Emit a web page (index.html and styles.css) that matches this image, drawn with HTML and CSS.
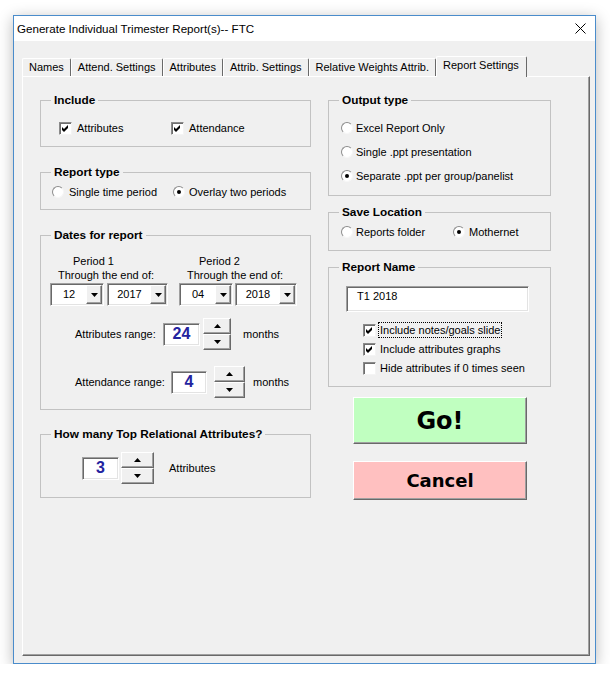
FILE: index.html
```html
<!DOCTYPE html>
<html>
<head>
<meta charset="utf-8">
<title>Generate Individual Trimester Report(s)</title>
<link rel="stylesheet" href="styles.css">
</head>
<body>
<div class="window">
  <div class="titlebar">
    <span class="title">Generate Individual Trimester Report(s)-- FTC</span>
    <svg class="close" width="11" height="11" viewBox="0 0 11 11"><path d="M0.5 0.5 L10.5 10.5 M10.5 0.5 L0.5 10.5" stroke="#000" stroke-width="1" fill="none"/></svg>
  </div>
  <div class="client">
    <div class="tabs">
      <div class="tab">Names</div>
      <div class="tab">Attend. Settings</div>
      <div class="tab">Attributes</div>
      <div class="tab">Attrib. Settings</div>
      <div class="tab">Relative Weights Attrib.</div>
      <div class="tab active">Report Settings</div>
    </div>
    <div class="page">
      <div class="col col-left">
        <fieldset class="grp g-include">
          <legend>Include</legend>
          <div class="gb row">
            <div class="chk w112"><span class="box"><svg width="11" height="11" viewBox="0 0 11 11"><polygon points="2,4 4,6 8,2 8,5 4,9 2,7" fill="#000"/></svg></span><span class="lbl">Attributes</span></div>
            <div class="chk"><span class="box"><svg width="11" height="11" viewBox="0 0 11 11"><polygon points="2,4 4,6 8,2 8,5 4,9 2,7" fill="#000"/></svg></span><span class="lbl">Attendance</span></div>
          </div>
        </fieldset>

        <fieldset class="grp g-rtype">
          <legend>Report type</legend>
          <div class="gb row">
            <div class="rad w121"><span class="radio"></span><span class="lbl gap5">Single time period</span></div>
            <div class="rad"><span class="radio on"></span><span class="lbl gap4">Overlay two periods</span></div>
          </div>
        </fieldset>

        <fieldset class="grp g-dates">
          <legend>Dates for report</legend>
          <div class="gb">
            <div class="periods">
              <div class="period">
                <div class="ptitle p1">Period 1</div>
                <div class="pthrough">Through the end of:</div>
                <div class="combos">
                  <div class="combo cw54"><span class="cval">12</span><span class="cbtn"><svg width="7" height="4" viewBox="0 0 7 4"><polygon points="0,0 7,0 3.5,4" fill="#000"/></svg></span></div>
                  <div class="combo cw61"><span class="cval">2017</span><span class="cbtn"><svg width="7" height="4" viewBox="0 0 7 4"><polygon points="0,0 7,0 3.5,4" fill="#000"/></svg></span></div>
                </div>
              </div>
              <div class="period period2">
                <div class="ptitle p2">Period 2</div>
                <div class="pthrough">Through the end of:</div>
                <div class="combos">
                  <div class="combo cw54"><span class="cval">04</span><span class="cbtn"><svg width="7" height="4" viewBox="0 0 7 4"><polygon points="0,0 7,0 3.5,4" fill="#000"/></svg></span></div>
                  <div class="combo cw62"><span class="cval">2018</span><span class="cbtn"><svg width="7" height="4" viewBox="0 0 7 4"><polygon points="0,0 7,0 3.5,4" fill="#000"/></svg></span></div>
                </div>
              </div>
            </div>

            <div class="spinrow sr-attr">
              <span class="slabel sl-attr">Attributes range:</span>
              <span class="num nw37">24</span>
              <div class="spin sp-attr">
                <span class="sbtn"><svg width="7" height="4" viewBox="0 0 7 4"><polygon points="0,4 7,4 3.5,0" fill="#000"/></svg></span>
                <span class="sbtn"><svg width="7" height="4" viewBox="0 0 7 4"><polygon points="0,0 7,0 3.5,4" fill="#000"/></svg></span>
              </div>
              <span class="unit u-attr">months</span>
            </div>

            <div class="spinrow sr-att">
              <span class="slabel sl-att">Attendance range:</span>
              <span class="num nw36">4</span>
              <div class="spin sp-att">
                <span class="sbtn"><svg width="7" height="4" viewBox="0 0 7 4"><polygon points="0,4 7,4 3.5,0" fill="#000"/></svg></span>
                <span class="sbtn"><svg width="7" height="4" viewBox="0 0 7 4"><polygon points="0,0 7,0 3.5,4" fill="#000"/></svg></span>
              </div>
              <span class="unit u-att">months</span>
            </div>
          </div>
        </fieldset>

        <fieldset class="grp g-top">
          <legend>How many Top Relational Attributes?</legend>
          <div class="gb spinrow">
            <span class="num nw37">3</span>
            <div class="spin sp-top">
              <span class="sbtn"><svg width="7" height="4" viewBox="0 0 7 4"><polygon points="0,4 7,4 3.5,0" fill="#000"/></svg></span>
              <span class="sbtn"><svg width="7" height="4" viewBox="0 0 7 4"><polygon points="0,0 7,0 3.5,4" fill="#000"/></svg></span>
            </div>
            <span class="unit u-top">Attributes</span>
          </div>
        </fieldset>
      </div>

      <div class="col col-right">
        <fieldset class="grp g-output">
          <legend>Output type</legend>
          <div class="gb radios">
            <div class="rad"><span class="radio"></span><span class="lbl gap3">Excel Report Only</span></div>
            <div class="rad"><span class="radio"></span><span class="lbl gap3">Single .ppt presentation</span></div>
            <div class="rad"><span class="radio on"></span><span class="lbl gap3">Separate .ppt per group/panelist</span></div>
          </div>
        </fieldset>

        <fieldset class="grp g-save">
          <legend>Save Location</legend>
          <div class="gb row">
            <div class="rad w112"><span class="radio"></span><span class="lbl gap3">Reports folder</span></div>
            <div class="rad"><span class="radio on"></span><span class="lbl gap4">Mothernet</span></div>
          </div>
        </fieldset>

        <fieldset class="grp g-name">
          <legend>Report Name</legend>
          <div class="gb">
            <div class="textbox">T1 2018</div>
            <div class="checks">
              <div class="chk"><span class="box"><svg width="11" height="11" viewBox="0 0 11 11"><polygon points="2,4 4,6 8,2 8,5 4,9 2,7" fill="#000"/></svg></span><span class="lbl focus">Include notes/goals slide</span></div>
              <div class="chk"><span class="box"><svg width="11" height="11" viewBox="0 0 11 11"><polygon points="2,4 4,6 8,2 8,5 4,9 2,7" fill="#000"/></svg></span><span class="lbl">Include attributes graphs</span></div>
              <div class="chk"><span class="box"></span><span class="lbl">Hide attributes if 0 times seen</span></div>
            </div>
          </div>
        </fieldset>

        <div class="bigbtn go">Go!</div>
        <div class="bigbtn cancel">Cancel</div>
      </div>
    </div>
  </div>
</div>
</body>
</html>
```

FILE: styles.css
```css
* { box-sizing: border-box; }

body {
  margin: 0;
  background: #ffffff;
  font-family: "Liberation Sans", Arial, sans-serif;
  font-size: 11px;
  color: #000;
}

.window {
  margin: 15px 0 0 13px;
  width: 583px;
  height: 649px;
  border: 1px solid #4a8ccb;
  background: #f0f0f0;
  box-shadow: 0 3px 14px rgba(0, 0, 0, 0.28);
}

.titlebar {
  height: 25px;
  background: #fff;
  display: flex;
  align-items: center;
  padding: 0 9px 0 3px;
}

.title {
  flex: 1;
  font-size: 11.6px;
  white-space: nowrap;
}

.close { display: block; }

.client {
  padding: 15px 0 0 8px;
}

/* tabs */
.tabs {
  display: flex;
  align-items: flex-end;
  height: 20px;
  position: relative;
  z-index: 1;
}

.tab {
  height: 18px;
  line-height: 16px;
  padding: 0 6px;
  border-top: 1px solid #fff;
  border-left: 1px solid #fff;
  border-right: 1px solid #696969;
  border-radius: 2px 2px 0 0;
  white-space: nowrap;
}

.tab.active {
  height: 21px;
  margin-bottom: -1px;
  background: #f0f0f0;
  padding: 0 7px 0 6px;
}

/* page */
.page {
  width: 568px;
  height: 580px;
  border: 1px solid;
  border-color: #fff #696969 #696969 #fff;
  box-shadow: inset -1px -1px 0 #a0a0a0;
  padding: 16px 0 0 17px;
  display: flex;
  align-items: flex-start;
}

.col-left { width: 271px; }
.col-right { width: 223px; margin-left: 17px; }

/* group boxes */
.grp {
  margin: 0;
  padding: 0;
  border: 1px solid #c2c2c2;
  min-width: 0;
}

.grp legend {
  margin-left: 10px;
  padding: 0 3px;
  font-weight: bold;
  font-size: 11.8px;
  line-height: 14px;
}

.row {
  display: flex;
  align-items: center;
  height: 14px;
}

.w112 { width: 112px; }
.w121 { width: 121px; }

.lbl { line-height: 14px; white-space: nowrap; }
.gap3 { margin-left: 3px; }
.gap4 { margin-left: 4px; }
.gap5 { margin-left: 5px; }

/* checkbox */
.chk {
  display: flex;
  align-items: center;
  height: 14px;
}

.chk .lbl { margin-left: 5px; }

.box {
  width: 13px;
  height: 13px;
  background: #fff;
  border: 1px solid;
  border-color: #8a8a8a #f4f4f4 #f4f4f4 #8a8a8a;
  box-shadow: inset 1px 1px 0 #6d6d6d;
  display: flex;
  flex-shrink: 0;
}

.box svg { display: block; }

/* radio */
.rad {
  display: flex;
  align-items: center;
  height: 14px;
}

.radio {
  width: 12px;
  height: 12px;
  border-radius: 50%;
  background: #fff;
  border: 1px solid;
  border-color: #8c8c8c #f6f6f6 #f6f6f6 #8c8c8c;
  display: flex;
  align-items: center;
  justify-content: center;
  flex-shrink: 0;
}

.radio.on::after {
  content: "";
  width: 4px;
  height: 4px;
  border-radius: 50%;
  background: #000;
}

/* Include */
.g-include { padding: 14px 0 11px 0; }
.g-include .gb { padding-left: 18px; }

/* Report type */
.g-rtype { margin-top: 18px; padding: 6px 0 10px 0; }
.g-rtype .gb { padding-left: 11px; }

/* Dates */
.g-dates { margin-top: 18px; padding: 12px 0 11px 0; }
.g-dates .gb { padding-left: 9px; }

.periods { display: flex; }
.period { width: 118px; }
.period2 { margin-left: 11px; width: 118px; }

.ptitle { line-height: 14px; white-space: nowrap; }
.p1 { padding-left: 23px; }
.p2 { padding-left: 20px; }
.pthrough { line-height: 14px; padding-left: 8px; white-space: nowrap; margin-bottom: 1px; }

.combos { display: flex; gap: 3px; }
.period2 .combos { gap: 2px; }

.combo {
  display: flex;
  height: 23px;
  background: #fff;
  border: 1px solid;
  border-color: #a0a0a0 #fff #fff #a0a0a0;
  box-shadow: inset 1px 1px 0 #696969, inset -1px -1px 0 #e3e3e3;
  padding: 1px;
}

.cw54 { width: 54px; }
.cw61 { width: 61px; }
.cw62 { width: 62px; }

.cval {
  flex: 1;
  text-align: center;
  line-height: 19px;
}

.cbtn {
  width: 16px;
  background: #f0f0f0;
  border: 1px solid;
  border-color: #fff #696969 #696969 #fff;
  box-shadow: inset -1px -1px 0 #a0a0a0;
  display: flex;
  align-items: center;
  justify-content: center;
}

.cbtn svg, .sbtn svg { display: block; }

/* spin rows */
.spinrow {
  display: flex;
  align-items: center;
  height: 32px;
}

.sr-attr { margin-top: 12px; }
.sr-att { margin-top: 16px; }

.slabel { white-space: nowrap; }
.sl-attr { margin-left: 25px; width: 88px; }
.sl-att { margin-left: 25px; width: 96px; }

.num {
  height: 23px;
  background: #fff;
  border: 1px solid;
  border-color: #a0a0a0 #fff #fff #a0a0a0;
  box-shadow: inset 1px 1px 0 #696969, inset -1px -1px 0 #e3e3e3;
  display: flex;
  align-items: center;
  justify-content: center;
  font-weight: bold;
  font-size: 16px;
  color: #23239f;
}

.nw37 { width: 37px; }
.nw36 { width: 36px; }

.spin {
  display: flex;
  flex-direction: column;
  height: 32px;
}

.sp-attr { width: 28px; margin-left: 3px; }
.sp-att { width: 31px; margin-left: 7px; }
.sp-top { width: 33px; margin-left: 2px; }

.sbtn {
  flex: 1;
  background: #f0f0f0;
  border: 1px solid;
  border-color: #fff #696969 #696969 #fff;
  box-shadow: inset -1px -1px 0 #a0a0a0;
  display: flex;
  align-items: center;
  justify-content: center;
}

.unit { white-space: nowrap; }
.u-attr { margin-left: 12px; }
.u-att { margin-left: 8px; }
.u-top { margin-left: 15px; }

/* Top relational */
.g-top { margin-top: 17px; padding: 11px 0 13px 0; }
.g-top .gb { padding-left: 41px; }

/* Output type */
.g-output { padding: 14px 0 12px 0; }
.radios {
  padding-left: 12px;
  display: flex;
  flex-direction: column;
  gap: 10px;
}

/* Save location */
.g-save { margin-top: 9px; padding: 6px 0 11px 0; }
.g-save .gb { padding-left: 12px; }

/* Report name */
.g-name { margin-top: 9px; padding: 12px 0 11px 0; }
.g-name .gb { padding-left: 17px; }

.textbox {
  width: 183px;
  height: 26px;
  background: #fff;
  border: 1px solid;
  border-color: #a0a0a0 #fff #fff #a0a0a0;
  box-shadow: inset 1px 1px 0 #696969, inset -1px -1px 0 #e3e3e3;
  padding: 2px 10px;
  line-height: 14px;
}

.checks {
  margin: 11px 0 0 17px;
  display: flex;
  flex-direction: column;
  gap: 5px;
}

.checks .chk .lbl { margin-left: 3px; padding: 0 1px; }

.focus { outline: 1px dotted #000; }

/* big buttons */
.bigbtn {
  margin-left: 25px;
  width: 174px;
  border: 1px solid;
  border-color: #fff #696969 #696969 #fff;
  box-shadow: inset -1px -1px 0 #a0a0a0;
  display: flex;
  align-items: center;
  justify-content: center;
  font-family: "DejaVu Sans", Verdana, sans-serif;
  font-weight: bold;
  color: #000;
}

.go {
  margin-top: 10px;
  height: 47px;
  background: #c0ffc0;
  font-size: 24px;
}

.cancel {
  margin-top: 17px;
  height: 39px;
  background: #ffc0c0;
  font-size: 18px;
}
```
